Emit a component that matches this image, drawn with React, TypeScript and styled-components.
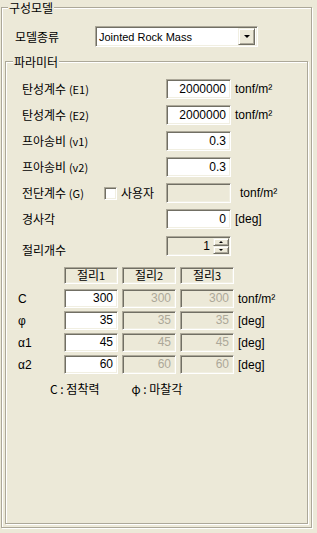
import styled, { createGlobalStyle } from 'styled-components';

const FACE = '#ECE9D8';
const SHADOW = '#ACA899';
const DARK = '#716F64';
const LIGHT = '#F1EFE2';

const GlobalStyle = createGlobalStyle`
  html, body {
    margin: 0;
    padding: 0;
    background: ${FACE};
  }
  body {
    font-family: 'Liberation Sans', 'Noto Sans CJK KR', sans-serif;
    font-size: 12px;
    color: #000;
  }
`;

const Page = styled.div`
  width: 317px;
  height: 533px;
  box-sizing: border-box;
  padding: 7px 0 0 1px;
  overflow: hidden;
`;

// etched group box, title sits over the top line
const Group = styled.div<{ $pad: string }>`
  position: relative;
  box-sizing: border-box;
  border: 1px solid ${SHADOW};
  box-shadow: inset 1px 1px 0 #fff, 1px 1px 0 #fff;
  padding: ${(p) => p.$pad};
  display: flex;
  flex-direction: column;
`;

const Outer = styled(Group)`
  width: 311px;
  height: 521px;
`;

const Inner = styled(Group)`
  flex: 1;
  margin-top: 14px;
`;

const GroupTitle = styled.div<{ $left: number }>`
  position: absolute;
  top: -8px;
  left: ${(p) => p.$left}px;
  padding: 0 1px;
  background: ${FACE};
  font-family: 'Noto Sans CJK KR', sans-serif;
  font-size: 12px;
  line-height: 15px;
`;

const ComboRow = styled.div`
  display: flex;
  align-items: center;
  margin-left: 10px;
  height: 21px;
`;

const Label = styled.span`
  font-family: 'Noto Sans CJK KR', sans-serif;
  font-size: 12px;
  line-height: 14px;
  white-space: nowrap;
`;

const ComboLabel = styled(Label)`
  width: 80px;
`;

const sunken = `
  box-sizing: border-box;
  border-style: solid;
  border-width: 1px;
  border-color: ${SHADOW} #fff #fff ${SHADOW};
  box-shadow: inset 1px 1px 0 ${DARK}, inset -1px -1px 0 ${LIGHT};
`;

const raised = `
  box-sizing: border-box;
  background: ${FACE};
  border-style: solid;
  border-width: 1px;
  border-color: ${LIGHT} ${DARK} ${DARK} ${LIGHT};
  box-shadow: inset 1px 1px 0 #fff, inset -1px -1px 0 ${SHADOW};
`;

const Combo = styled.div`
  ${sunken}
  width: 163px;
  height: 21px;
  background: #fff;
  display: flex;
  align-items: center;
  padding: 2px 2px 2px 3px;
  font-size: 11px;
`;

const ComboText = styled.span`
  flex: 1;
`;

const ArrowButton = styled.div<{ $w: number; $h: number }>`
  ${raised}
  width: ${(p) => p.$w}px;
  height: ${(p) => p.$h}px;
  display: flex;
  align-items: center;
  justify-content: center;
`;

const Tri = styled.span<{ $size: number; $up?: boolean }>`
  width: 0;
  height: 0;
  border-left: ${(p) => p.$size}px solid transparent;
  border-right: ${(p) => p.$size}px solid transparent;
  ${(p) =>
    p.$up
      ? `border-bottom: ${p.$size}px solid #000;`
      : `border-top: ${p.$size}px solid #000;`}
`;

const Params = styled.div`
  display: flex;
  flex-direction: column;
  gap: 6px;
  margin: 17px 0 0 16px;
`;

const ParamRow = styled.div`
  display: grid;
  grid-template-columns: 144px 65px auto;
  align-items: center;
  height: 20px;
`;

const Field = styled.div<{ $disabled?: boolean; $w?: number; $h?: number }>`
  ${sunken}
  width: ${(p) => p.$w ?? 65}px;
  height: ${(p) => p.$h ?? 20}px;
  background: ${(p) => (p.$disabled ? FACE : '#fff')};
  color: ${(p) => (p.$disabled ? SHADOW : '#000')};
  font-size: 12px;
  text-align: right;
  padding: 0 4px;
  line-height: ${(p) => (p.$h ?? 20) - 2}px;
  display: flex;
  align-items: center;
  justify-content: flex-end;
`;

const Unit = styled.span<{ $gap?: number }>`
  margin-left: ${(p) => p.$gap ?? 4}px;
  font-size: 12px;
  white-space: nowrap;
`;

const ShearLabel = styled.div`
  display: flex;
  align-items: center;
`;

const Check = styled.span`
  ${sunken}
  width: 13px;
  height: 13px;
  background: #fff;
  margin: 0 4px 0 0;
`;

const Spin = styled.div`
  display: flex;
  flex-direction: column;
  margin-left: 3px;
`;

const Table = styled.div`
  display: grid;
  grid-template-columns: 42px 54px 54px 54px auto;
  column-gap: 4px;
  row-gap: 3px;
  align-items: center;
  margin: 12px 0 0 12px;
`;

const Head = styled.div`
  ${sunken}
  height: 17px;
  margin-bottom: 2px;
  background: ${FACE};
  text-align: center;
  font-family: 'Noto Sans CJK KR', sans-serif;
  font-size: 12px;
  line-height: 14px;
`;

const Small = styled.span`
  font-size: 11px;
`;

const RowLabel = styled.span`
  font-size: 12px;
`;

const Legend = styled.div`
  display: flex;
  margin: 8px 0 0 44px;
  gap: 32px;
  font-size: 12px;
  line-height: 14px;
`;

const params = [
  { label: '탄성계수', sub: '(E1)', value: '2000000', unit: 'tonf/m²' },
  { label: '탄성계수', sub: '(E2)', value: '2000000', unit: 'tonf/m²' },
  { label: '프아송비', sub: '(v1)', value: '0.3', unit: '' },
  { label: '프아송비', sub: '(v2)', value: '0.3', unit: '' },
];

const joints = [
  { label: 'C', values: ['300', '300', '300'], unit: 'tonf/m²' },
  { label: 'φ', values: ['35', '35', '35'], unit: '[deg]' },
  { label: 'α1', values: ['45', '45', '45'], unit: '[deg]' },
  { label: 'α2', values: ['60', '60', '60'], unit: '[deg]' },
];

const App = () => {
  return (
    <Page>
      <GlobalStyle />
      <Outer $pad="18px 3px 3px 3px">
        <GroupTitle $left={6}>구성모델</GroupTitle>
        <ComboRow>
          <ComboLabel>모델종류</ComboLabel>
          <Combo>
            <ComboText>Jointed Rock Mass</ComboText>
            <ArrowButton $w={17} $h={17}>
              <Tri $size={3.5} />
            </ArrowButton>
          </Combo>
        </ComboRow>

        <Inner $pad="0">
          <GroupTitle $left={7}>파라미터</GroupTitle>
          <Params>
            {params.map((p, i) => (
              <ParamRow key={i}>
                <Label>
                  {p.label} <Small>{p.sub}</Small>
                </Label>
                <Field>{p.value}</Field>
                {p.unit ? <Unit>{p.unit}</Unit> : <span />}
              </ParamRow>
            ))}
            <ParamRow>
              <ShearLabel>
                <Label style={{ width: 82 }}>
                  전단계수 <Small>(G)</Small>
                </Label>
                <Check />
                <Label>사용자</Label>
              </ShearLabel>
              <Field $disabled />
              <Unit $gap={9}>tonf/m²</Unit>
            </ParamRow>
            <ParamRow>
              <Label>경사각</Label>
              <Field>0</Field>
              <Unit>[deg]</Unit>
            </ParamRow>
            <ParamRow>
              <Label style={{ marginTop: 8 }}>절리개수</Label>
              <Field $disabled style={{ color: '#000', paddingRight: 1 }}>
                1
                <Spin>
                  <ArrowButton $w={16} $h={8}>
                    <Tri $size={2} $up />
                  </ArrowButton>
                  <ArrowButton $w={16} $h={8}>
                    <Tri $size={2} />
                  </ArrowButton>
                </Spin>
              </Field>
              <span />
            </ParamRow>
          </Params>

          <Table>
            <span />
            <Head>
              절리<Small>1</Small>
            </Head>
            <Head>
              절리<Small>2</Small>
            </Head>
            <Head>
              절리<Small>3</Small>
            </Head>
            <span />
            {joints.map((j) => [
              <RowLabel key={j.label}>{j.label}</RowLabel>,
              ...j.values.map((v, i) => (
                <Field key={j.label + i} $w={54} $h={19} $disabled={i > 0}>
                  {v}
                </Field>
              )),
              <Unit key={j.label + 'u'} $gap={0}>
                {j.unit}
              </Unit>,
            ])}
          </Table>

          <Legend>
            <Label>C : 점착력</Label>
            <Label>φ : 마찰각</Label>
          </Legend>
        </Inner>
      </Outer>
    </Page>
  );
};

export default App;
